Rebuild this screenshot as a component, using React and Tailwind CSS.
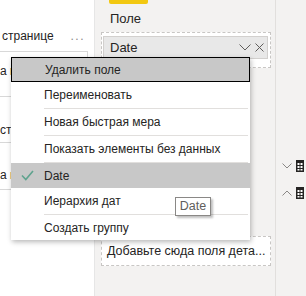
import React from "react";

const font = { fontFamily: '"Liberation Sans", Arial, sans-serif' };

function TableIcon() {
  return (
    <svg width="8" height="12" viewBox="0 0 8 12">
      <rect x="0" y="0" width="8" height="12" fill="#252423" />
      <rect x="1.5" y="3" width="2" height="2" fill="#fff" />
      <rect x="4.5" y="3" width="2" height="2" fill="#fff" />
      <rect x="1.5" y="6" width="2" height="2" fill="#fff" />
      <rect x="4.5" y="6" width="2" height="2" fill="#fff" />
      <rect x="1.5" y="9" width="2" height="1.5" fill="#fff" />
      <rect x="4.5" y="9" width="2" height="1.5" fill="#fff" />
    </svg>
  );
}

function Chevron({ up, w = 10, h = 6, color = "#8a8886" }) {
  return (
    <svg width={w} height={h} viewBox={`0 0 ${w} ${h}`}>
      <path
        d={up ? `M0.5 ${h - 0.5} L${w / 2} 1 L${w - 0.5} ${h - 0.5}` : `M0.5 0.5 L${w / 2} ${h - 1} L${w - 0.5} 0.5`}
        fill="none"
        stroke={color}
        strokeWidth="1"
      />
    </svg>
  );
}

const items = [
  { label: "Удалить поле", active: true },
  { label: "Переименовать" },
  { sep: true },
  { label: "Новая быстрая мера" },
  { sep: true },
  { label: "Показать элементы без данных" },
  { sep: true },
  { label: "Date", checked: true },
  { label: "Иерархия дат" },
  { sep: true },
  { label: "Создать группу" },
];

export default function App() {
  return (
    <div
      className="relative w-[306px] h-[296px] overflow-hidden flex bg-[#f3f2f1] text-[#252423] text-[12px]"
      style={font}
    >
      {/* left panel */}
      <div className="w-[95px] h-full bg-white border-r border-[#e6e6e6] flex flex-col">
        <div className="h-[51px] flex items-start pt-[27px] pl-[2px] pr-[9px] leading-[18px]">
          <span className="flex-1 whitespace-nowrap">странице</span>
          <span className="text-[#8a8886] tracking-[1.5px]">...</span>
        </div>
        <div className="w-[88px] h-[46px] border-t border-r border-b border-[#d8d8d8] pt-[10px] leading-[18px] whitespace-nowrap overflow-hidden">
          а года
        </div>
        <div className="w-[88px] h-[46px] border-b border-[#d8d8d8] pt-[24px] leading-[18px] whitespace-nowrap overflow-hidden">
          стр
        </div>
        <div className="w-[88px] h-[47px] border-b border-[#d8d8d8] pt-[23px] leading-[18px] whitespace-nowrap overflow-hidden">
          а года
        </div>
      </div>

      {/* middle panel */}
      <div className="w-[181px] h-full border-r border-[#e1dfdd] flex flex-col px-[6px]">
        <div className="ml-[8px] w-[39px] h-[4px] rounded-b-[2px] bg-[#f2c811]" />
        <div className="ml-[9px] mt-[6px] h-[18px] leading-[18px] text-[13px]">Поле</div>
        <div className="mt-[4px] w-[170px] h-[36px] border border-dashed border-[#c8c6c4] bg-white pt-[3px] pl-[1px] pr-[2px]">
          <div className="h-[23px] bg-[#e8e8e8] border border-[#d2d0ce] flex items-center pl-[6px] pr-[3px]">
            <span className="flex-1 text-[13px]">Date</span>
            <div className="mr-[4px] flex items-center">
              <Chevron w={12} h={7} color="#605e5c" />
            </div>
            <svg width="9" height="9" viewBox="0 0 9 9">
              <path d="M0.5 0.5 L8.5 8.5 M8.5 0.5 L0.5 8.5" stroke="#605e5c" strokeWidth="1" />
            </svg>
          </div>
        </div>
        <div className="mt-[168px] w-[170px] h-[30px] border border-dashed border-[#c8c6c4] bg-white flex items-center pl-[5px] text-[12.5px] whitespace-nowrap overflow-hidden">
          Добавьте сюда поля дета...
        </div>
      </div>

      {/* right panel */}
      <div className="flex-1 h-full flex flex-col pl-[6px] pt-[160px]">
        <div className="h-[12px] flex items-center gap-[4px]">
          <Chevron />
          <TableIcon />
        </div>
        <div className="mt-[15px] h-[12px] flex items-center gap-[4px]">
          <Chevron up />
          <TableIcon />
        </div>
      </div>

      {/* context menu */}
      <div className="absolute left-[11px] top-[57px] w-[239px] bg-white shadow-[1px_2px_5px_rgba(0,0,0,0.28)] flex flex-col">
        {items.map((it, i) =>
          it.sep ? (
            <div key={i} className="mt-px h-px ml-[33px] mr-[2px] bg-[#e1dfdd]" />
          ) : (
            <div
              key={i}
              className={
                "relative h-[25px] flex items-center pl-[33px] text-[12px] whitespace-nowrap " +
                (it.active
                  ? "bg-[#c8c8c8] border border-black pl-[32px]"
                  : it.checked
                  ? "bg-[#c8c8c8]"
                  : "")
              }
            >
              {it.checked && (
                <svg
                  className="absolute left-[10px] top-[7px]"
                  width="13"
                  height="11"
                  viewBox="0 0 13 11"
                >
                  <path d="M1 5.5 L4.8 9.5 L12 1" fill="none" stroke="#5fa38e" strokeWidth="1.6" />
                </svg>
              )}
              {it.label}
            </div>
          )
        )}
      </div>

      {/* tooltip */}
      <div className="absolute left-[175px] top-[197px] w-[36px] h-[19px] bg-white border border-[#8a8886] shadow-[2px_2px_2px_rgba(0,0,0,0.25)] flex items-center justify-center text-[12.5px] text-[#605e5c]">
        Date
      </div>
    </div>
  );
}
